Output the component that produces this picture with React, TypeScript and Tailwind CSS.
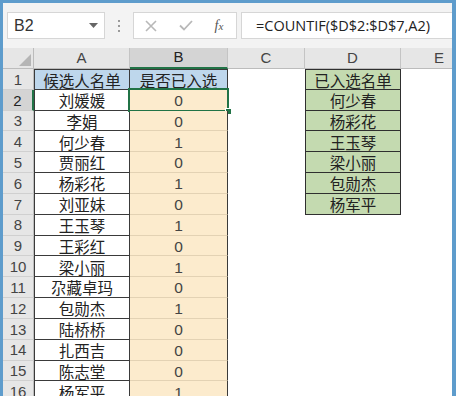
import React from "react";

const names = ["刘媛媛","李娟","何少春","贾丽红","杨彩花","刘亚妹","王玉琴","王彩红","梁小丽","尕藏卓玛","包勋杰","陆桥桥","扎西吉","陈志堂","杨军平"];
const vals = [0,0,1,0,1,0,1,0,1,0,1,0,0,0,1];
const dList = ["已入选名单","何少春","杨彩花","王玉琴","梁小丽","包勋杰","杨军平"];

const cjk = { fontFamily: '"Noto Sans CJK SC", "Noto Sans", sans-serif' };
const lat = { fontFamily: '"Liberation Sans", Arial, sans-serif' };

export default function App() {
  const rows: React.ReactNode[] = [];
  for (let r = 1; r <= 16; r++) {
    const sel = r === 2;
    rows.push(
      <div key={"rh" + r} className={`flex items-center justify-center pt-[2px] border-b border-[#d0d0d0] text-[15px] ${sel ? "bg-[#d4d4d4] text-[#222] border-r-2 border-r-[#217346]" : "bg-[#e6e6e6] text-[#444] border-r border-r-[#bcbcbc]"}`} style={lat}>{r}</div>
    );
    if (r === 1) {
      rows.push(<div key={"a" + r} className="flex items-center justify-center pt-[2px] bg-[#bed7ec] border border-[#3a3a3a] text-[15.5px] text-[#222] leading-none" style={cjk}>候选人名单</div>);
      rows.push(<div key={"b" + r} className="flex items-center justify-center pt-[2px] bg-[#bed7ec] border-y border-r border-[#3a3a3a] text-[15.5px] text-[#222] leading-none" style={cjk}>是否已入选</div>);
    } else {
      rows.push(<div key={"a" + r} className="flex items-center justify-center pt-[2px] bg-white border-x border-b border-[#3a3a3a] text-[15.5px] text-[#222] leading-none" style={cjk}>{names[r - 2]}</div>);
      rows.push(
        <div key={"b" + r} className="relative flex items-center justify-center pt-[2px] bg-[#fcebcd] border-r border-r-[#3a3a3a] border-b border-b-[#e3d2b4] text-[15.5px] text-[#444] leading-none" style={lat}>
          {vals[r - 2]}
          {sel && (
            <>
              <div className="absolute left-[-2px] top-[-2px] right-[-2px] bottom-[-2px] border-2 border-[#217346]" />
              <div className="absolute right-[-5px] bottom-[-5px] w-[7px] h-[7px] bg-[#217346] border border-white" />
            </>
          )}
        </div>
      );
    }
    rows.push(<div key={"c" + r} className="bg-white" />);
    if (r <= 7) {
      rows.push(<div key={"d" + r} className={`flex items-center justify-center pt-[2px] bg-[#c4dab0] border-x border-b border-[#2f2f2f] ${r === 1 ? "border-t" : ""} text-[15.5px] text-[#222] leading-none`} style={cjk}>{dList[r - 1]}</div>);
    } else {
      rows.push(<div key={"d" + r} className="bg-white" />);
    }
    rows.push(<div key={"e" + r} className="bg-white" />);
  }

  return (
    <div className="w-[456px] h-[396px] overflow-hidden bg-white flex flex-col">
      <div className="h-[3px] bg-[#5e9ccc] shrink-0" />
      <div className="flex flex-1 min-h-0">
        <div className="w-[3px] bg-[#5e9ccc] shrink-0" />
        <div className="flex-1 min-w-0 overflow-hidden flex flex-col">
          <div className="h-[45px] shrink-0 bg-[#f3f3f3] flex items-start pt-[9px] pl-[4px]">
            <div className="w-[98px] h-[27px] bg-white border border-[#d6d6d6] flex items-center justify-between pl-[6px] pr-[6px]">
              <span className="text-[16px] text-[#333]" style={lat}>B2</span>
              <svg width="9" height="5" viewBox="0 0 9 5"><polygon points="0,0 9,0 4.5,5" fill="#666" /></svg>
            </div>
            <div className="w-[28px] h-[27px] flex flex-col items-center justify-center gap-[3px]">
              <div className="w-[2px] h-[2px] bg-[#9a9a9a]" />
              <div className="w-[2px] h-[2px] bg-[#9a9a9a]" />
              <div className="w-[2px] h-[2px] bg-[#9a9a9a]" />
            </div>
            <div className="w-[104px] h-[27px] bg-white border border-[#d6d6d6] flex items-center">
              <div className="w-[34px] flex justify-center">
                <svg width="12" height="12" viewBox="0 0 12 12"><path d="M1 1 L11 11 M11 1 L1 11" stroke="#b8b8b8" strokeWidth="1.6" /></svg>
              </div>
              <div className="w-[36px] flex justify-center">
                <svg width="14" height="11" viewBox="0 0 14 11"><path d="M1 5.5 L5 9.5 L13 1" stroke="#b8b8b8" strokeWidth="1.8" fill="none" /></svg>
              </div>
              <div className="w-[30px] flex justify-center">
                <span className="text-[14px] italic text-[#555]" style={{ fontFamily: '"Liberation Serif", serif' }}>f<span className="text-[11px]">x</span></span>
              </div>
            </div>
            <div className="w-[4px]" />
            <div className="flex-1 h-[27px] bg-white border border-[#d6d6d6] border-r-0 flex items-center pl-[14px]">
              <span className="text-[14.5px] text-[#222]" style={{ fontFamily: '"Open Sans", sans-serif' }}>=COUNTIF($D$2:$D$7,A2)</span>
            </div>
          </div>
          <div className="grid grid-cols-[31px_96px_98px_77px_96px_77px] grid-rows-[21px_repeat(16,20.83px)] w-[475px]">
            <div className="bg-[#e6e6e6] border-r border-b border-[#bcbcbc] relative">
              <svg className="absolute right-[2px] bottom-[2px]" width="12" height="12" viewBox="0 0 12 12"><polygon points="12,0 12,12 0,12" fill="#b5b5b5" /></svg>
            </div>
            {["A", "B", "C", "D", "E"].map((c) => (
              <div key={c} className={`flex items-center justify-center border-r border-[#c4c4c4] text-[15px] ${c === "B" ? "bg-[#d4d4d4] text-[#222] border-b-2 border-b-[#217346]" : "bg-[#e6e6e6] text-[#444] border-b border-b-[#bcbcbc]"}`} style={lat}>{c}</div>
            ))}
            {rows}
          </div>
        </div>
        <div className="w-[4px] bg-[#5e9ccc] shrink-0" />
      </div>
    </div>
  );
}
